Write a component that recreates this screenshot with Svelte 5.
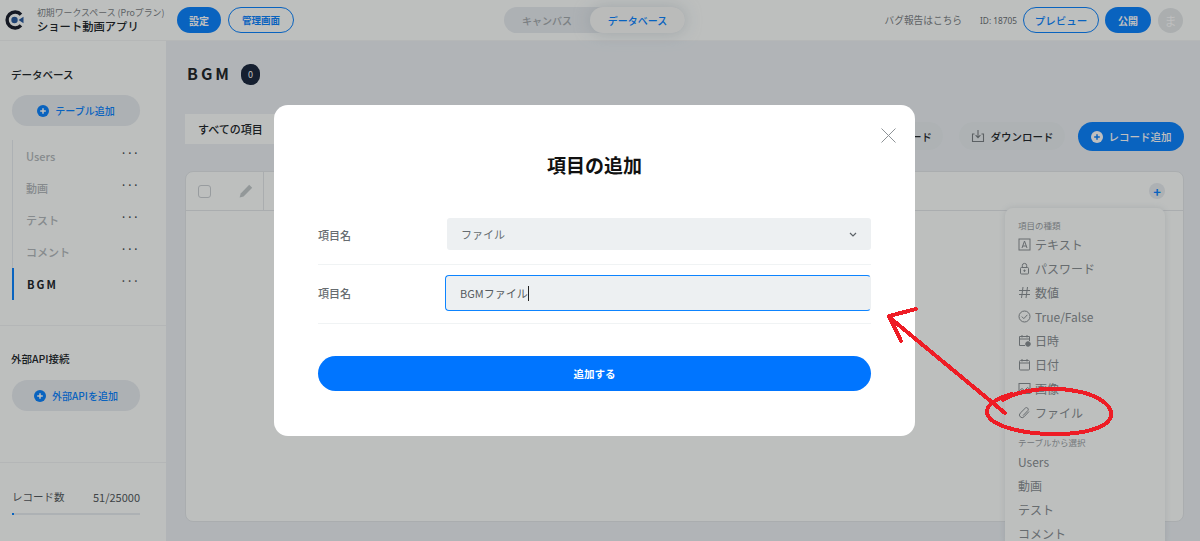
<script lang="ts">
	const tables = ['Users', '動画', 'テスト', 'コメント', 'BGM'];
	const refs = ['Users', '動画', 'テスト', 'コメント'];
	const types = [
		{ label: 'テキスト', icon: 'text' },
		{ label: 'パスワード', icon: 'lock' },
		{ label: '数値', icon: 'hash' },
		{ label: 'True/False', icon: 'check' },
		{ label: '日時', icon: 'datetime' },
		{ label: '日付', icon: 'date' },
		{ label: '画像', icon: 'image' },
		{ label: 'ファイル', icon: 'clip' }
	];
</script>

{#snippet plus(size)}
	<svg width={size} height={size} viewBox="0 0 12 12" class="plus-icon">
		<circle cx="6" cy="6" r="6" fill="currentColor" />
		<path d="M6 3.2v5.6M3.2 6h5.6" stroke="#fff" stroke-width="1.5" />
	</svg>
{/snippet}

<div class="page">
	<header class="topbar">
		<svg class="logo" width="20" height="20" viewBox="0 0 20 20">
			<path d="M16 4.6A8 8 0 1 0 16 15.4" fill="none" stroke="#1d2230" stroke-width="3.4" />
			<circle cx="9.5" cy="10" r="3.2" fill="#2c5c9e" />
			<path d="M13.5 10l5-3.2v6.4z" fill="#2c5c9e" />
		</svg>
		<div class="app-name">
			<span class="workspace">初期ワークスペース (Proプラン)</span>
			<strong>ショート動画アプリ</strong>
		</div>
		<button class="pill solid settings">設定</button>
		<button class="pill outline admin">管理画面</button>

		<div class="mode-tabs">
			<span class="mode">キャンバス</span>
			<span class="mode active">データベース</span>
		</div>

		<div class="top-right">
			<span class="bug">バグ報告はこちら</span>
			<span class="app-id">ID: 18705</span>
			<button class="pill outline preview">プレビュー</button>
			<button class="pill solid publish">公開</button>
			<span class="avatar">ま</span>
		</div>
	</header>

	<div class="body">
		<aside class="sidebar">
			<section class="side-db">
				<h3>データベース</h3>
				<button class="side-add">{@render plus(12)}<span>テーブル追加</span></button>
				<ul class="table-list">
					{#each tables as t}
						<li class:current={t === 'BGM'}>
							<span>{t}</span>
							<i class="dots">•••</i>
						</li>
					{/each}
				</ul>
			</section>
			<section class="side-api">
				<h3>外部API接続</h3>
				<button class="side-add">{@render plus(12)}<span>外部APIを追加</span></button>
			</section>
			<section class="side-usage">
				<div class="usage-row"><span>レコード数</span><span class="usage-num">51/25000</span></div>
				<div class="usage-bar"><div class="usage-fill" style:width="2px"></div></div>
			</section>
		</aside>

		<main class="content">
			<div class="title-row">
				<h1>BGM</h1>
				<span class="count">0</span>
			</div>
			<div class="toolbar">
				<div class="view-tab">すべての項目</div>
				<div class="actions">
					<button class="ghost upload">アップロード</button>
					<button class="ghost">
						<svg width="14" height="14" viewBox="0 0 14 14" fill="none" stroke="#7a8084" stroke-width="1.1">
							<path d="M3.5 5H1.5v7.5h11V5h-2M7 1v7.5M4.6 6.2 7 8.6l2.4-2.4" />
						</svg>
						ダウンロード
					</button>
					<button class="add-record">{@render plus(12)}<span>レコード追加</span></button>
				</div>
			</div>
			<div class="table">
				<div class="table-head">
					<span class="checkbox"></span>
					<svg class="pencil" width="14" height="14" viewBox="0 0 14 14">
						<path d="M10.2.8l3 3-8.6 8.6-4 1.1 1.1-4z" fill="#c4cbcd" />
					</svg>
					<span class="head-line"></span>
					<span class="head-plus">+</span>
				</div>
			</div>
		</main>
	</div>

	<div class="type-menu">
		<p class="menu-title">項目の種類</p>
		{#each types as t}
			<div class="menu-item">
				<svg width="13" height="13" viewBox="0 0 13 13" fill="none" stroke="#8a9094" stroke-width="1">
					{#if t.icon === 'text'}
						<rect x="1" y="1" width="11" height="11" />
						<path d="M4 10l2.5-7L9 10M4.8 8h3.4" />
					{:else if t.icon === 'lock'}
						<rect x="2.5" y="5.5" width="8" height="6.5" rx="1" />
						<path d="M4.3 5.5V3.6a2.2 2.2 0 0 1 4.4 0v1.9" />
						<circle cx="6.5" cy="8.7" r=".7" fill="#8a9094" />
					{:else if t.icon === 'hash'}
						<path d="M5 1 3.5 12M9.5 1 8 12M1 4.5h11M1 8.5h11" />
					{:else if t.icon === 'check'}
						<circle cx="6.5" cy="6.5" r="5.5" />
						<path d="M3.8 6.6l2 2 3.6-3.8" />
					{:else if t.icon === 'datetime'}
						<path d="M7 11.5H1.5v-9h10V7M1.5 5h10M4 1v2.5M9 1v2.5" />
						<circle cx="10" cy="10" r="2.3" fill="#8a9094" />
					{:else if t.icon === 'date'}
						<rect x="1.5" y="2.5" width="10" height="9.5" rx="1" />
						<path d="M1.5 5h10M4 1v2.5M9 1v2.5" />
					{:else if t.icon === 'image'}
						<rect x="1" y="1.5" width="11" height="10" />
						<path d="M1 9l3-2.5 2.5 2 3-3 2.5 2" />
					{:else}
						<path d="M11 5.5 6 10.8a2.6 2.6 0 0 1-3.8-3.6L7.4 2a1.8 1.8 0 0 1 2.6 2.4L5 9.6" />
					{/if}
				</svg>
				<span>{t.label}</span>
			</div>
		{/each}
		<p class="menu-title from-table">テーブルから選択</p>
		{#each refs as r}
			<div class="menu-item ref">{r}</div>
		{/each}
	</div>

	<div class="backdrop">
		<div class="modal">
			<button class="close" aria-label="閉じる">
				<svg width="15" height="15" viewBox="0 0 15 15" stroke="#8d9296" stroke-width="1">
					<path d="M.5.5l14 14M14.5.5l-14 14" />
				</svg>
			</button>
			<h2>項目の追加</h2>
			<div class="form-row first">
				<span class="form-label">項目名</span>
				<div class="select">
					<span>ファイル</span>
					<svg width="8" height="5" viewBox="0 0 8 5" fill="none" stroke="#5c6268" stroke-width="1.2">
						<path d="M1 1l3 3 3-3" />
					</svg>
				</div>
			</div>
			<div class="form-row second">
				<span class="form-label">項目名</span>
				<div class="input">BGMファイル<i class="caret"></i></div>
			</div>
			<button class="submit">追加する</button>
		</div>
	</div>

	<!-- 赤い手書きの注釈 -->
	<svg class="markup" width="1200" height="541" viewBox="0 0 1200 541" fill="none" stroke="#ee1c25" stroke-linecap="round" shape-rendering="crispEdges">
		<path d="M1005 413 889 317M889 316 916 309M889 316 901 341" stroke-width="4" />
		<path d="M1003 400C1018 390 1050 386 1076 391 1098 395 1112 405 1111 415 1110 427 1085 435 1050 434 1015 433 988 424 987 412 987 404 998 398 1012 394" stroke-width="4" />
	</svg>
</div>

<style>
	:global(body) {
		margin: 0;
		overflow: hidden;
		font-family: 'Noto Sans CJK JP', 'Noto Sans', sans-serif;
		color: #23282c;
	}
	button {
		font-family: inherit;
		cursor: pointer;
		border: none;
		padding: 0;
	}
	h1, h2, h3, p, ul {
		margin: 0;
		padding: 0;
	}
	.page {
		position: relative;
		width: 1200px;
		height: 541px;
		overflow: hidden;
		background: #ecf1f5;
	}

	.topbar {
		position: relative;
		display: flex;
		align-items: center;
		height: 41px;
		background: #fcfffe;
		border-bottom: 1px solid #f2f4f4;
		box-sizing: border-box;
	}
	.logo {
		margin-left: 5px;
		flex: none;
	}
	.app-name {
		display: flex;
		flex-direction: column;
		margin-left: 12px;
		width: 140px;
	}
	.workspace {
		font-size: 8.9px;
		line-height: 13px;
		color: #7e8488;
		white-space: nowrap;
	}
	.app-name strong {
		font-size: 11.3px;
		line-height: 15px;
		font-weight: 500;
		color: #23282c;
	}
	.pill {
		height: 26px;
		border-radius: 13px;
		font-size: 10px;
		font-weight: 700;
		box-sizing: border-box;
	}
	.solid {
		background: #0d84ff;
		color: #fff;
	}
	.outline {
		background: transparent;
		border: 1px solid #0d84ff;
		color: #0d84ff;
	}
	.settings { width: 44px; }
	.admin { width: 66px; margin-left: 7px; font-size: 9.5px; }
	.mode-tabs {
		position: absolute;
		left: 504px;
		top: 7px;
		display: flex;
		width: 181px;
		height: 26px;
		border-radius: 13px;
		background: #e7ecf0;
	}
	.mode {
		display: flex;
		align-items: center;
		justify-content: center;
		font-size: 10px;
		font-weight: 500;
		color: #a5abaf;
		width: 86px;
	}
	.mode.active {
		width: 95px;
		color: #0d84ff;
		background: #f8faf9;
		border-radius: 13px;
		box-shadow: 0 0 16px rgba(180, 190, 200, 0.5);
	}
	.top-right {
		display: flex;
		align-items: center;
		margin-left: auto;
		padding-right: 17px;
	}
	.bug {
		font-size: 9.7px;
		color: #7e8488;
		margin-right: 18px;
	}
	.app-id {
		font-family: 'Noto Sans', sans-serif;
		font-size: 8.3px;
		color: #6c7276;
		margin-right: 6px;
	}
	.preview { width: 76px; font-size: 10.5px; font-weight: 500; }
	.publish { width: 46px; margin-left: 6px; }
	.avatar {
		display: flex;
		align-items: center;
		justify-content: center;
		width: 25px;
		height: 25px;
		margin-left: 7px;
		border-radius: 50%;
		background: #e4e9ea;
		color: #fff;
		font-size: 12px;
	}

	.body {
		display: flex;
		height: 500px;
	}
	.sidebar {
		display: flex;
		flex-direction: column;
		width: 166px;
		flex: none;
		background: #fcfffe;
		box-sizing: border-box;
	}
	.sidebar h3 {
		font-size: 10.5px;
		font-weight: 500;
		line-height: 14px;
		padding-left: 11px;
	}
	.side-db {
		height: 285px;
		padding-top: 27px;
		box-sizing: border-box;
		border-bottom: 1px solid #f0f3f4;
	}
	.side-add {
		display: flex;
		align-items: center;
		justify-content: center;
		gap: 6px;
		width: 128px;
		height: 31px;
		margin: 13px 0 0 12px;
		border-radius: 16px;
		background: #e7ecf0;
		color: #0d84ff;
		font-size: 10px;
		font-weight: 500;
	}
	.side-api .side-add {
		margin-top: 14px;
	}
	.table-list {
		list-style: none;
		margin: 14px 0 0 12px;
		width: 128px;
		border-left: 1px solid #e7ecf0;
	}
	.table-list li {
		display: flex;
		justify-content: space-between;
		align-items: center;
		height: 32px;
		padding-left: 13px;
		font-size: 11px;
		font-weight: 500;
		color: #b3b9bc;
		box-sizing: border-box;
	}
	.table-list li.current {
		margin-left: -1px;
		border-left: 2px solid #0d84ff;
		color: #23282c;
		font-weight: 700;
		letter-spacing: 2px;
	}
	.dots {
		font-style: normal;
		font-size: 6px;
		letter-spacing: 4px;
		color: #444a4e;
		margin: -7px 0 0 0;
	}
	.side-api {
		height: 137px;
		padding-top: 26px;
		box-sizing: border-box;
		border-bottom: 1px solid #f0f3f4;
	}
	.side-usage {
		padding: 26px 26px 0 12px;
	}
	.usage-row {
		display: flex;
		justify-content: space-between;
		font-size: 10.5px;
		line-height: 16px;
		color: #555b60;
	}
	.usage-num {
		font-size: 11px;
	}
	.usage-bar {
		height: 2px;
		margin-top: 8px;
		background: #e7ecf0;
	}
	.usage-fill {
		height: 2px;
		background: #0d84ff;
	}

	.content {
		flex: 1;
		padding: 23px 16px 0 19px;
		min-width: 0;
	}
	.title-row {
		display: flex;
		align-items: center;
		gap: 9px;
		margin-left: 2px;
		height: 21px;
	}
	.title-row h1 {
		font-size: 16px;
		line-height: 18px;
		font-weight: 700;
		letter-spacing: 3px;
		color: #23282c;
		margin-top: -4px;
	}
	.count {
		display: flex;
		align-items: center;
		justify-content: center;
		width: 19px;
		height: 21px;
		border-radius: 9px;
		background: #1d2a40;
		color: #fff;
		font-size: 9px;
	}
	.toolbar {
		display: flex;
		align-items: flex-start;
		justify-content: space-between;
		margin-top: 29px;
	}
	.view-tab {
		width: 100px;
		height: 30px;
		line-height: 30px;
		padding-left: 13px;
		background: #fcfffe;
		font-size: 11px;
		font-weight: 500;
		box-sizing: border-box;
	}
	.actions {
		display: flex;
		gap: 13px;
		margin-top: 8px;
	}
	.ghost {
		display: flex;
		align-items: center;
		justify-content: center;
		gap: 6px;
		width: 106px;
		height: 28px;
		border-radius: 14px;
		background: #e9eef1;
		color: #23282c;
		font-size: 10.5px;
		font-weight: 500;
	}
	.ghost.upload {
		margin-right: 3px;
		justify-content: flex-end;
		padding-right: 11px;
		box-sizing: border-box;
	}
	.add-record {
		display: flex;
		align-items: center;
		justify-content: center;
		gap: 6px;
		width: 106px;
		height: 29px;
		border-radius: 15px;
		background: #0d84ff;
		color: #fff;
		font-size: 10.5px;
		font-weight: 500;
	}
	.add-record .plus-icon {
		color: #fff;
	}
	.add-record :global(path) {
		stroke: #0d84ff;
	}
	.table {
		height: 351px;
		margin-top: 20px;
		background: #fcfffe;
		border: 1px solid #e3e7ea;
		border-radius: 8px;
		box-sizing: border-box;
	}
	.table-head {
		display: flex;
		align-items: center;
		height: 38px;
		border-bottom: 1px solid #e3e7ea;
	}
	.checkbox {
		width: 13px;
		height: 13px;
		margin-left: 12px;
		border: 1px solid #cbd0d4;
		border-radius: 3px;
		box-sizing: border-box;
	}
	.pencil { margin-left: 28px; }
	.head-line {
		width: 1px;
		height: 100%;
		margin-left: 10px;
		background: #e3e7ea;
	}
	.head-plus {
		display: flex;
		align-items: center;
		justify-content: center;
		width: 16px;
		height: 16px;
		margin-left: auto;
		margin-right: 18px;
		border-radius: 50%;
		background: #e7ecf0;
		color: #0d84ff;
		font-size: 13px;
		font-weight: 700;
	}

	.type-menu {
		position: absolute;
		left: 1005px;
		top: 208px;
		width: 160px;
		height: 340px;
		padding: 10px 13px;
		background: #fcfffe;
		border-radius: 8px;
		box-shadow: 0 0 6px rgba(120, 130, 140, 0.2);
		box-sizing: border-box;
	}
	.menu-title {
		font-size: 8.5px;
		line-height: 14px;
		color: #9aa0a4;
	}
	.menu-title.from-table {
		margin-top: 11px;
	}
	.menu-item {
		display: flex;
		align-items: center;
		gap: 4px;
		height: 24px;
		font-size: 12px;
		color: #8a9094;
	}

	.backdrop {
		position: absolute;
		inset: 0;
		padding: 105px 0 0 274px;
		background: rgba(0, 0, 0, 0.25);
		box-sizing: border-box;
	}
	.modal {
		position: relative;
		width: 641px;
		height: 331px;
		padding: 46px 44px 0;
		background: #fff;
		border-radius: 14px;
		box-sizing: border-box;
	}
	.close {
		position: absolute;
		top: 23px;
		right: 19px;
		background: none;
		line-height: 0;
	}
	.modal h2 {
		font-size: 19px;
		line-height: 28px;
		font-weight: 700;
		text-align: center;
		color: #111;
	}
	.form-row {
		display: flex;
		align-items: center;
		border-bottom: 1px solid #f0f3f4;
	}
	.form-row.first {
		margin-top: 39px;
		height: 46px;
		align-items: flex-start;
	}
	.form-row.second {
		height: 59px;
		padding-bottom: 3px;
		box-sizing: border-box;
	}
	.form-label {
		width: 127px;
		flex: none;
		font-size: 11px;
		font-weight: 500;
		color: #666c70;
	}
	.first .form-label {
		line-height: 34px;
		width: 129px;
	}
	.select {
		display: flex;
		align-items: center;
		justify-content: space-between;
		flex: 1;
		height: 32px;
		padding: 0 14px;
		background: #edf0f2;
		border-radius: 3px;
		font-size: 11px;
		color: #666c70;
		box-sizing: border-box;
	}
	.input {
		flex: 1;
		height: 36px;
		line-height: 34px;
		padding-left: 14px;
		background: #edf0f2;
		border: 1px solid #0d84ff;
		border-right-color: transparent;
		border-radius: 4px;
		font-size: 11px;
		color: #555b60;
		box-sizing: border-box;
	}
	.caret {
		display: inline-block;
		width: 1px;
		height: 15px;
		background: #222;
		vertical-align: -3px;
	}
	.submit {
		display: block;
		width: 100%;
		height: 35px;
		margin-top: 32px;
		border-radius: 18px;
		background: #0075ff;
		color: #fff;
		font-size: 10.5px;
		font-weight: 700;
	}
	.markup {
		position: absolute;
		left: 0;
		top: 0;
		pointer-events: none;
	}
</style>
